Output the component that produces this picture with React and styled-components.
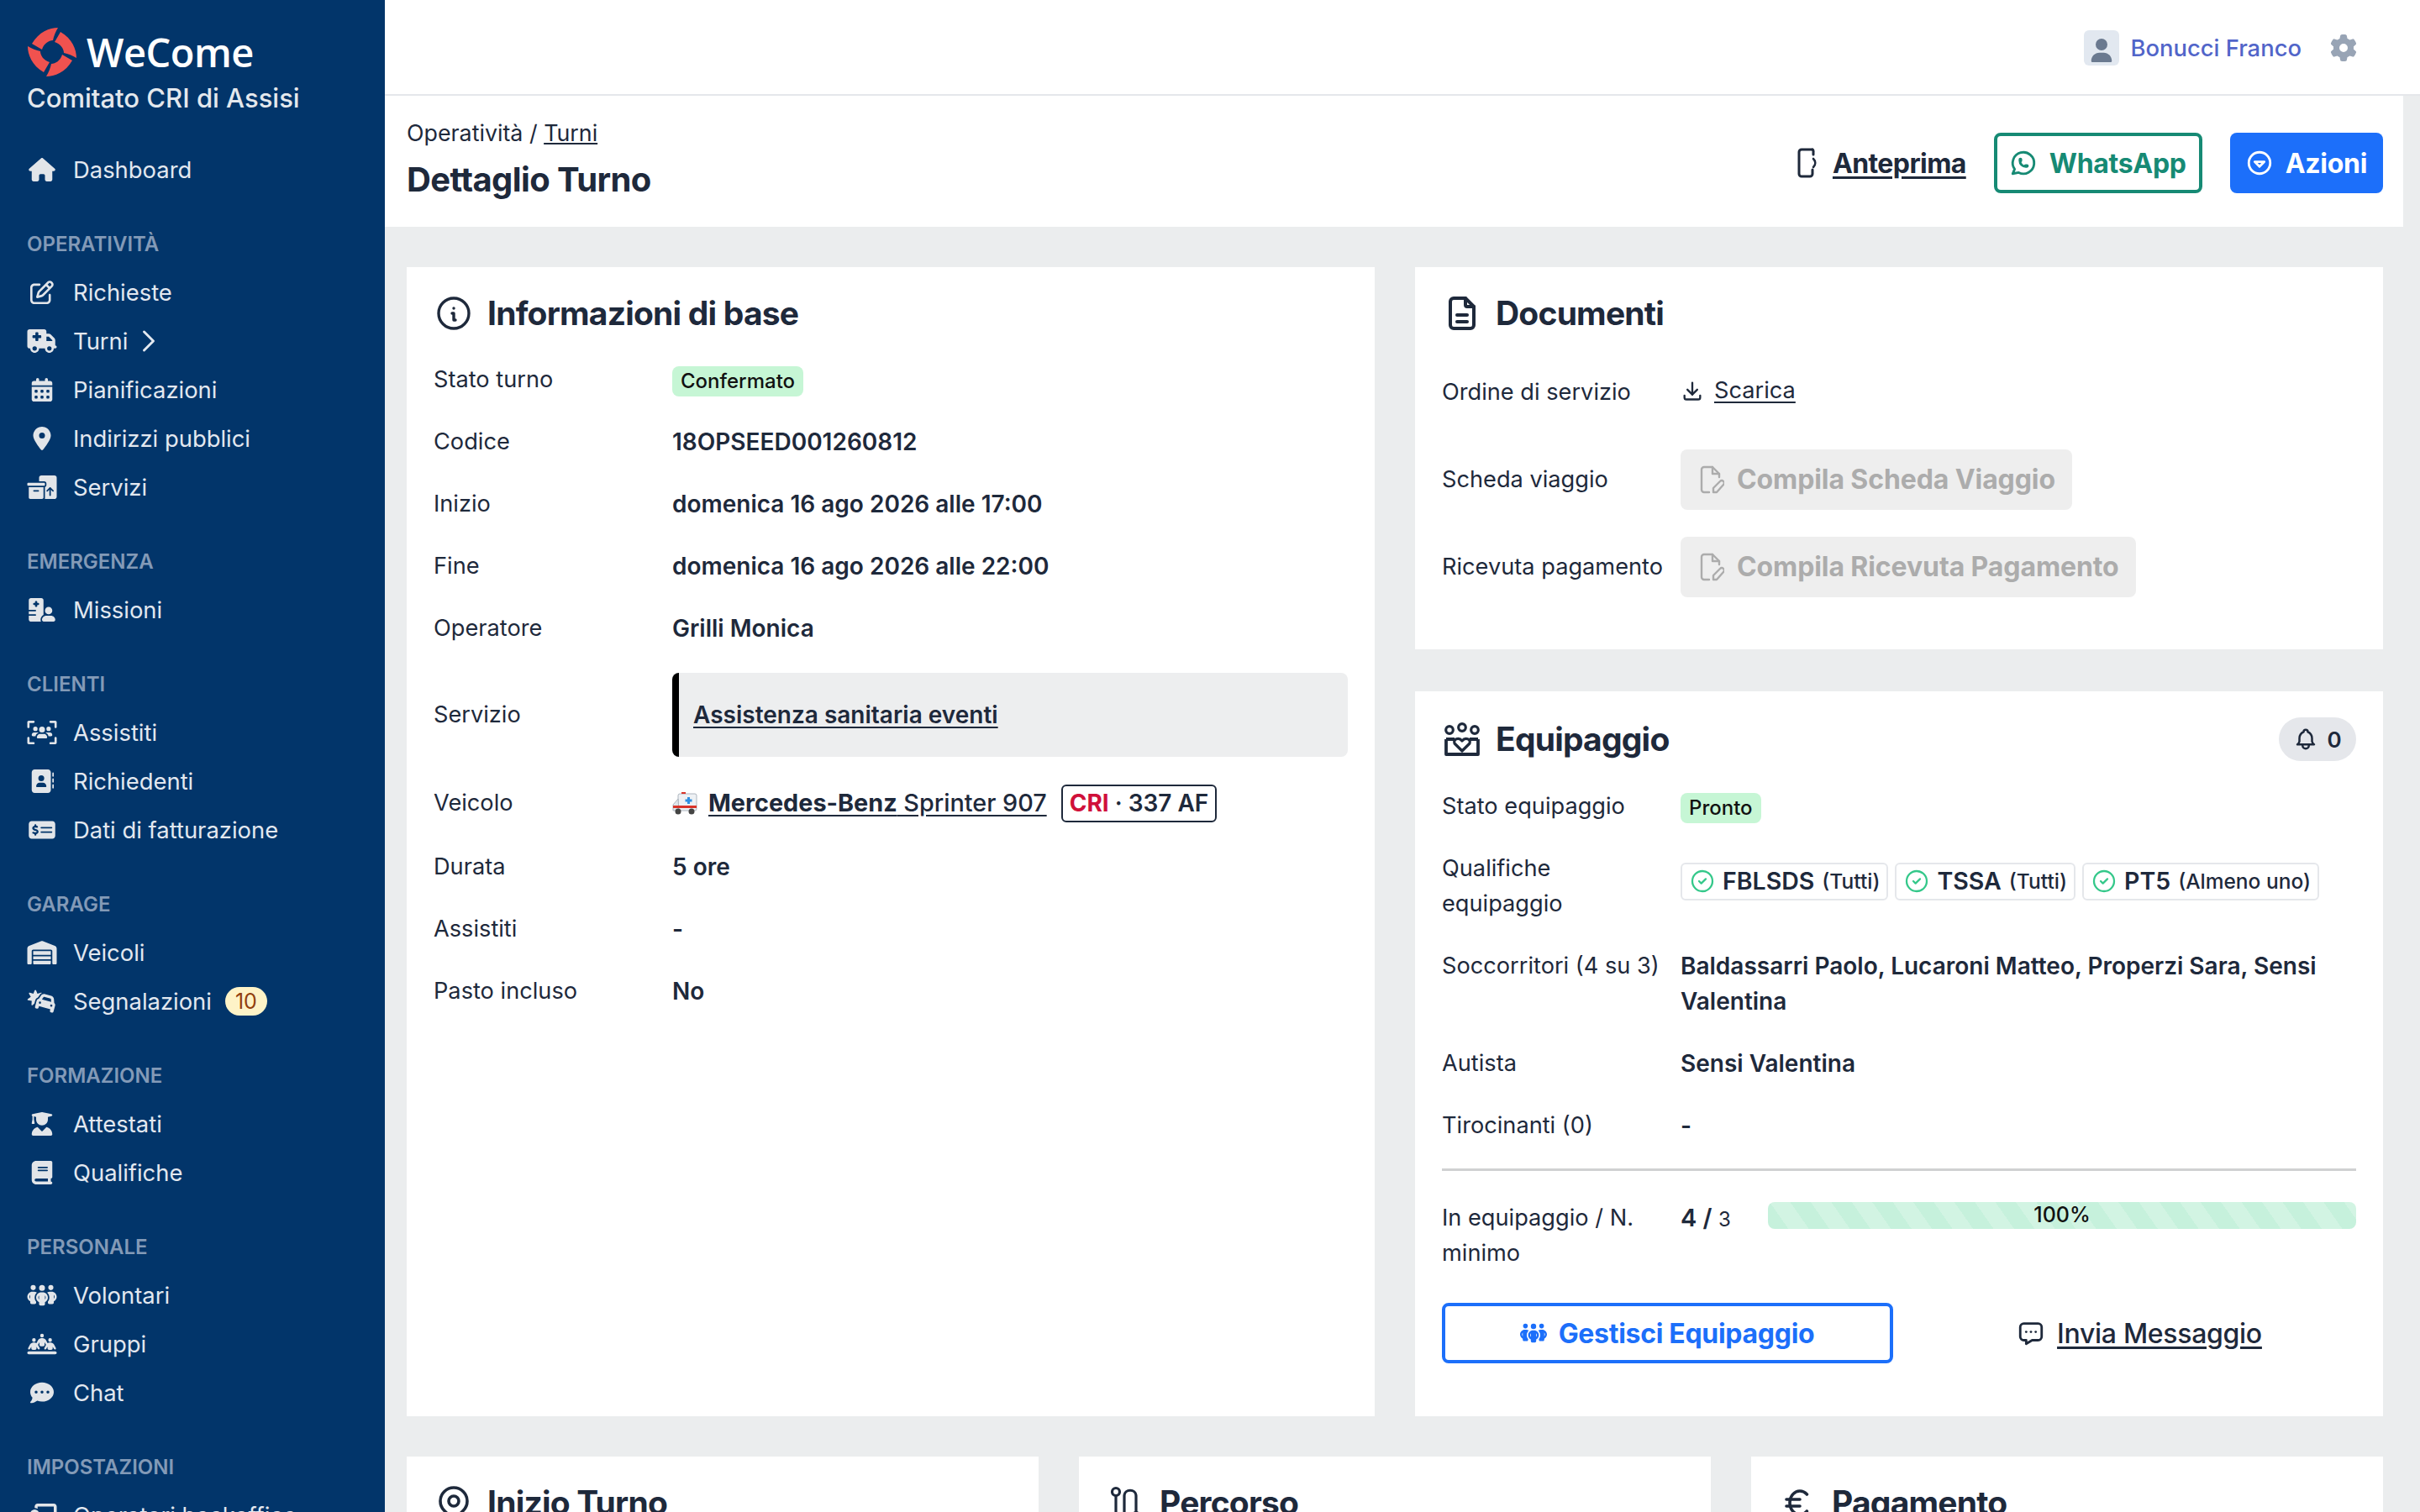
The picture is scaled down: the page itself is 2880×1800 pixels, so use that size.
import React from "react";
import styled, { createGlobalStyle } from "styled-components";
import {
  FaHouse, FaRegPenToSquare, FaTruckMedical, FaCalendarDays, FaLocationDot, FaBoxesPacking,
  FaHospitalUser, FaUsersViewfinder, FaAddressBook, FaMoneyCheckDollar, FaWarehouse, FaCarBurst,
  FaUserGraduate, FaBook, FaPeopleGroup, FaPeopleLine, FaCommentDots, FaChalkboardUser,
  FaGear, FaUser,
} from "react-icons/fa6";
import {
  TbInfoCircle, TbFileDescription, TbBrandWhatsapp, TbCircleCaretDown, TbChevronRight,
  TbDownload, TbCircleCheck, TbBell, TbMessageDots, TbMapPin, TbCurrencyEuro,
} from "react-icons/tb";

const colors = {
  navy: "#02356a",
  ink: "#1e293b",
  page: "#ebedee",
  blue: "#1c6ffa",
  teal: "#168a74",
  green: "#c6f6d5",
};

const Global = createGlobalStyle`
  html, body { margin: 0; padding: 0; background: #fff; }
  * { box-sizing: border-box; }
  body { font-family: Inter, "Liberation Sans", sans-serif; color: ${colors.ink}; }
`;

const Shell = styled.div`
  display: flex;
  width: 2880px;
  height: 1800px;
  overflow: hidden;
`;

const Sidebar = styled.aside`
  width: 458px;
  flex: none;
  height: 1800px;
  overflow: hidden;
  background: ${colors.navy};
  padding: 32px 0 0 32px;
`;

const Brand = styled.div`
  display: flex;
  align-items: center;
  gap: 11px;
  height: 60px;
`;

const BrandName = styled.span`
  font-family: "Open Sans", Inter, sans-serif;
  font-size: 47px;
  font-weight: 600;
  color: #fff;
  letter-spacing: -0.5px;
`;

const Org = styled.div`
  font-size: 31px;
  font-weight: 500;
  line-height: 44px;
  margin-top: 3px;
  color: #e4e8ed;
  white-space: nowrap;
`;

const NavItem = styled.div`
  display: flex;
  align-items: center;
  height: 58px;
  font-size: 27.4px;
  color: #e2e8f0;
  white-space: nowrap;
`;

const NavIcon = styled.span`
  width: 36px;
  flex: none;
  margin-right: 19px;
  display: flex;
  align-items: center;
  justify-content: center;
  color: #e2e5e9;
  svg { width: 36px; height: 28px; }
`;

const Section = styled.section`
  padding-top: 40px;
`;

const SectionTitle = styled.h3`
  margin: 0 0 12px;
  height: 36px;
  line-height: 39px;
  font-size: 24px;
  font-weight: 600;
  color: #839ab7;
`;

const TopNavWrap = styled.div`
  margin-top: 34px;
`;

const Counter = styled.span`
  margin-left: 16px;
  width: 50px;
  height: 34px;
  border-radius: 17px;
  background: #fef3c7;
  color: #92400e;
  font-size: 25px;
  display: flex;
  align-items: center;
  justify-content: center;
`;

const Main = styled.div`
  flex: 1;
  display: flex;
  flex-direction: column;
  min-width: 0;
`;

const TopBar = styled.header`
  height: 114px;
  flex: none;
  background: #fff;
  border-bottom: 2px solid #e5e7eb;
  display: flex;
  align-items: center;
  justify-content: flex-end;
  padding: 2px 75px 0 0;
`;

const Avatar = styled.span`
  width: 42px;
  height: 42px;
  border-radius: 6px;
  background: #e2e8f0;
  color: #6b7a90;
  display: flex;
  align-items: flex-end;
  justify-content: center;
  overflow: hidden;
  padding-bottom: 4px;
  font-size: 28px;
`;

const UserName = styled.span`
  font-size: 27.4px;
  font-weight: 500;
  color: #5165c9;
  margin: 0 34px 0 13px;
`;

const Scroll = styled.div`
  flex: 1;
  background: ${colors.page};
  padding-right: 20px;
  min-height: 0;
  overflow: hidden;
`;

const PageHead = styled.div`
  height: 156px;
  background: #fff;
  display: flex;
  align-items: flex-start;
  justify-content: space-between;
  padding: 22px 24px 0 26px;
`;

const Crumbs = styled.div`
  font-size: 26.8px;
  line-height: 44px;
  a { color: inherit; text-decoration: underline; }
`;

const PageTitle = styled.h1`
  margin: 10px 0 0;
  font-size: 40px;
  line-height: 48px;
  font-weight: 700;
  letter-spacing: -0.6px;
`;

const Actions = styled.div`
  display: flex;
  align-items: center;
  gap: 33px;
  height: 72px;
  margin-top: 22px;
`;

const Button = styled.span`
  height: 72px;
  display: inline-flex;
  align-items: center;
  justify-content: center;
  gap: ${(p) => (p.$flat ? 18 : 14)}px;
  padding: ${(p) => (p.$flat ? "0" : "0 15px 0 14px")};
  border-radius: 8px;
  font-size: 32px;
  font-weight: 700;
  letter-spacing: -0.3px;
  white-space: nowrap;
  border: ${(p) => (p.$flat ? "none" : `4px solid ${p.$line || "transparent"}`)};
  background: ${(p) => p.$fill || "transparent"};
  color: ${(p) => p.$text || colors.ink};
  svg { flex: none; }
`;

const TextLink = styled.span`
  text-decoration: underline;
  text-underline-offset: 4px;
  font-weight: ${(p) => (p.$medium ? 500 : "inherit")};
`;

const Content = styled.div`
  padding: 48px 24px 0 26px;
`;

const TopGrid = styled.div`
  display: grid;
  grid-template-columns: 1152px 1152px;
  gap: 48px;
`;

const Column = styled.div`
  display: flex;
  flex-direction: column;
  gap: 50px;
`;

const BottomGrid = styled.div`
  display: grid;
  grid-template-columns: repeat(3, 752px);
  gap: 48px;
  margin-top: 48px;
`;

const Card = styled.div`
  background: #fff;
  padding: 32px 32px ${(p) => p.$bottom || 32}px;
`;

const CardHead = styled.div`
  display: flex;
  align-items: center;
  min-height: 46px;
  margin-top: ${(p) => (p.$lift ? -p.$lift : 0)}px;
  margin-bottom: ${(p) => p.$gap || 19}px;
`;

const CardTitle = styled.h2`
  margin: 0;
  font-size: 39px;
  line-height: 46px;
  font-weight: 700;
  letter-spacing: -0.8px;
  flex: 1;
`;

const CardIcon = styled.span`
  width: 48px;
  height: 46px;
  margin-right: 16px;
  flex: none;
  display: flex;
  align-items: center;
  justify-content: center;
`;

const BellPill = styled.span`
  width: 92px;
  height: 52px;
  border-radius: 26px;
  background: #e5e7eb;
  display: flex;
  align-items: center;
  justify-content: center;
  gap: 10px;
  font-size: 26px;
  font-weight: 600;
`;

const Row = styled.div`
  display: flex;
  align-items: ${(p) => (p.$top ? "flex-start" : "center")};
  padding: 16px 0;
  min-height: ${(p) => (p.$tall ? "104px" : "74px")};
`;

const Label = styled.div`
  width: 284px;
  flex: none;
  padding-right: 15px;
  font-size: 27.2px;
  line-height: 42px;
`;

const Value = styled.div`
  flex: 1;
  min-width: 0;
  font-size: 28px;
  line-height: 42px;
  font-weight: 600;
`;

const Badge = styled.span`
  display: inline-flex;
  align-items: center;
  height: 36px;
  padding: 0 10px;
  border-radius: 8px;
  background: ${colors.green};
  color: #111;
  font-size: 24px;
  font-weight: 500;
  vertical-align: middle;
`;

const ServiceBox = styled.div`
  height: 100px;
  display: flex;
  align-items: center;
  padding-left: 17px;
  background: #edeeef;
  border-left: 8px solid #000;
  border-radius: 8px;
  a { color: inherit; text-decoration: underline; text-underline-offset: 4px; }
`;

const VehicleLine = styled.div`
  display: flex;
  align-items: center;
  gap: 17px;
  min-height: 46px;
  font-size: 28.8px;
`;

const VehicleLink = styled.span`
  text-decoration: underline;
  text-underline-offset: 4px;
  white-space: nowrap;
  font-weight: 500;
  svg { vertical-align: -5px; margin-right: 13px; }
  b { font-weight: 700; }
`;

const Plate = styled.span`
  height: 45px;
  padding: 0 8px;
  border: 2px solid ${colors.ink};
  border-radius: 6px;
  display: inline-flex;
  align-items: center;
  font-size: 28px;
  white-space: nowrap;
  b { color: #d0103a; font-weight: 700; }
`;

const DownloadLink = styled.span`
  display: inline-flex;
  align-items: center;
  gap: 12px;
  font-size: 27.2px;
  font-weight: 400;
`;

const DisabledButton = styled.span`
  height: 72px;
  display: inline-flex;
  align-items: center;
  gap: 15px;
  padding: 0 20px 0 22px;
  border-radius: 8px;
  background: #eeeeee;
  color: #acacac;
  font-size: 32px;
  font-weight: 700;
  letter-spacing: -0.1px;
  white-space: nowrap;
`;

const Chips = styled.div`
  display: flex;
  gap: 8px;
  margin-top: -12px;
`;

const Chip = styled.span`
  height: 45px;
  display: inline-flex;
  align-items: center;
  gap: 8px;
  padding: 0 8px 0 8px;
  border: 2px solid #e5e7eb;
  border-radius: 6px;
  font-size: 28.5px;
  font-weight: 600;
  white-space: nowrap;
  svg { color: #34c88a; }
  small { font-size: 24.5px; font-weight: 500; margin-left: 1px; }
`;

const Divider = styled.hr`
  border: none;
  height: 3px;
  background: #d0d1d2;
  margin: 14px 0 0;
`;

const CrewRow = styled.div`
  display: flex;
  align-items: flex-start;
  padding: 35px 0 0;
`;

const CrewCount = styled.div`
  width: 104px;
  flex: none;
  font-size: 29px;
  line-height: 42px;
  font-weight: 600;
  small { font-size: 24px; font-weight: 400; }
`;

const Progress = styled.div`
  flex: 1;
  height: 32px;
  margin-top: 2px;
  border-radius: 8px;
  background: repeating-linear-gradient(55deg, #c6f1dc 0 20px, #d2f4e3 20px 40px);
  color: #111;
  font-size: 25px;
  font-weight: 500;
  line-height: 30px;
  text-align: center;
`;

const CrewActions = styled.div`
  display: grid;
  grid-template-columns: 537px 1fr;
  margin-top: 38px;
`;

const CenterCell = styled.div`
  display: flex;
  justify-content: center;
  padding-left: 36px;
`;

const Logo = () => (
  <svg width="60" height="60" viewBox="0 0 60 60" fill="#f0524f">
    {[0, 90, 180, 270].map((r) => (
      <path
        key={r}
        transform={`rotate(${r} 30 30)`}
        d="M37 1 C 27 1, 14 6, 6 20 L 18 27 C 20 20, 26 16, 31 16 C 32 11, 34 6, 37 1 Z"
      />
    ))}
  </svg>
);

const CrewIcon = () => (
  <svg width="42" height="40" viewBox="0 0 42 40" fill="none" stroke={colors.ink} strokeWidth="3.200" strokeLinejoin="round">
    <circle cx="6" cy="9" r="4.300" />
    <circle cx="21" cy="6" r="4.300" />
    <circle cx="36" cy="9" r="4.300" />
    <path d="M2 20 H12 M30 20 H40 M2 20 V38 H40 V20" strokeWidth="3.800" />
    <path d="M21 34 L12 25 C10 20, 17 17, 21 22 C25 17, 32 20, 30 25 Z" />
  </svg>
);

const RouteIcon = () => (
  <svg width="40" height="40" viewBox="0 0 40 40" fill="none" stroke={colors.ink} strokeWidth="3.200" strokeLinecap="round" strokeLinejoin="round">
    <circle cx="8" cy="7" r="4.500" />
    <path d="M8 12 V36" />
    <path d="M18 36 V12 C18 3, 32 3, 32 12 V30" />
    <circle cx="32" cy="34" r="2.500" />
  </svg>
);

const PhoneSignalIcon = () => (
  <svg width="24" height="36" viewBox="0 0 24 36" fill="none" stroke="currentColor" strokeWidth="3" strokeLinecap="round">
    <path d="M18 2 H5 a3 3 0 0 0 -3 3 V31 a3 3 0 0 0 3 3 H15 a3 3 0 0 0 3 -3 V26" />
    <path d="M18 2 a3 3 0 0 1 1 3 V8" />
    <path d="M19 13 C22 16, 22 20, 19 23" strokeWidth="2.600" />
  </svg>
);

const FilePenIcon = () => (
  <svg width="30" height="36" viewBox="0 0 30 36" fill="none" stroke="currentColor" strokeWidth="2.400" strokeLinecap="round" strokeLinejoin="round">
    <path d="M12 33 H6 a3 3 0 0 1 -3 -3 V6 a3 3 0 0 1 3 -3 H16 L24 11 V15" />
    <path d="M16 3 V11 H24" />
    <path d="M17 33 V28 L25 20 a2.800 2.800 0 0 1 4 4 L21 33 Z" />
  </svg>
);

const Ambulance = () => (
  <svg width="30" height="28" viewBox="0 0 30 28">
    <rect x="7" y="2" width="22" height="20" rx="2" fill="#eef1f4" stroke="#aeb6bf" strokeWidth="1" />
    <path d="M7 8 L1 15 V22 H8 Z" fill="#dfe5ea" stroke="#aeb6bf" strokeWidth="1" />
    <rect x="1" y="16" width="28" height="3" fill="#d8352a" />
    <rect x="18" y="6" width="3" height="8" fill="#2f8fe0" />
    <rect x="15.500" y="8.500" width="8" height="3" fill="#2f8fe0" />
    <rect x="11" y="0" width="5" height="2" fill="#d8352a" />
    <circle cx="7" cy="23" r="3.500" fill="#444" />
    <circle cx="23" cy="23" r="3.500" fill="#444" />
  </svg>
);

const navSections = [
  {
    title: "OPERATIVITÀ",
    items: [
      { icon: FaRegPenToSquare, label: "Richieste" },
      { icon: FaTruckMedical, label: "Turni", chevron: true },
      { icon: FaCalendarDays, label: "Pianificazioni" },
      { icon: FaLocationDot, label: "Indirizzi pubblici" },
      { icon: FaBoxesPacking, label: "Servizi" },
    ],
  },
  { title: "EMERGENZA", items: [{ icon: FaHospitalUser, label: "Missioni" }] },
  {
    title: "CLIENTI",
    items: [
      { icon: FaUsersViewfinder, label: "Assistiti" },
      { icon: FaAddressBook, label: "Richiedenti" },
      { icon: FaMoneyCheckDollar, label: "Dati di fatturazione" },
    ],
  },
  {
    title: "GARAGE",
    items: [
      { icon: FaWarehouse, label: "Veicoli" },
      { icon: FaCarBurst, label: "Segnalazioni", count: 10 },
    ],
  },
  {
    title: "FORMAZIONE",
    items: [
      { icon: FaUserGraduate, label: "Attestati" },
      { icon: FaBook, label: "Qualifiche" },
    ],
  },
  {
    title: "PERSONALE",
    items: [
      { icon: FaPeopleGroup, label: "Volontari" },
      { icon: FaPeopleLine, label: "Gruppi" },
      { icon: FaCommentDots, label: "Chat" },
    ],
  },
  { title: "IMPOSTAZIONI", items: [{ icon: FaChalkboardUser, label: "Operatori backoffice" }] },
];

const infoRows = [
  ["Codice", "18OPSEED001260812"],
  ["Inizio", "domenica 16 ago 2026 alle 17:00"],
  ["Fine", "domenica 16 ago 2026 alle 22:00"],
  ["Operatore", "Grilli Monica"],
];

const tailRows = [
  ["Durata", "5 ore"],
  ["Assistiti", "-"],
  ["Pasto incluso", "No"],
];

const NavEntry = ({ item }) => {
  const Icon = item.icon;
  return (
    <NavItem>
      <NavIcon><Icon /></NavIcon>
      {item.label}
      {item.chevron && <TbChevronRight size={44} strokeWidth={1.6} style={{ marginLeft: 3 }} />}
      {item.count && <Counter>{item.count}</Counter>}
    </NavItem>
  );
};

export default function App() {
  return (
    <Shell>
      <Global />
      <Sidebar>
        <Brand>
          <Logo />
          <BrandName>WeCome</BrandName>
        </Brand>
        <Org>Comitato CRI di Assisi</Org>
        <TopNavWrap>
          <NavEntry item={{ icon: FaHouse, label: "Dashboard" }} />
        </TopNavWrap>
        {navSections.map((s) => (
          <Section key={s.title}>
            <SectionTitle>{s.title}</SectionTitle>
            {s.items.map((i) => <NavEntry key={i.label} item={i} />)}
          </Section>
        ))}
      </Sidebar>
      <Main>
        <TopBar>
          <Avatar><FaUser /></Avatar>
          <UserName>Bonucci Franco</UserName>
          <FaGear size={32} color="#98a4b5" />
        </TopBar>
        <Scroll>
          <PageHead>
            <div>
              <Crumbs>Operatività / <a href="#turni">Turni</a></Crumbs>
              <PageTitle>Dettaglio Turno</PageTitle>
            </div>
            <Actions>
              <Button $flat>
                <PhoneSignalIcon />
                <TextLink $medium={false} style={{ letterSpacing: "-0.6px" }}>Anteprima</TextLink>
              </Button>
              <Button $line={colors.teal} $text={colors.teal}>
                <TbBrandWhatsapp size={34} />
                WhatsApp
              </Button>
              <Button $fill={colors.blue} $text="#fff">
                <TbCircleCaretDown size={34} />
                Azioni
              </Button>
            </Actions>
          </PageHead>
          <Content>
            <TopGrid>
              <Card>
                <CardHead>
                  <CardIcon><TbInfoCircle size={52} strokeWidth={1.7} /></CardIcon>
                  <CardTitle>Informazioni di base</CardTitle>
                </CardHead>
                <Row>
                  <Label>Stato turno</Label>
                  <Value><Badge>Confermato</Badge></Value>
                </Row>
                {infoRows.map(([k, v]) => (
                  <Row key={k}>
                    <Label>{k}</Label>
                    <Value>{v}</Value>
                  </Row>
                ))}
                <Row>
                  <Label>Servizio</Label>
                  <Value>
                    <ServiceBox><a href="#servizio">Assistenza sanitaria eventi</a></ServiceBox>
                  </Value>
                </Row>
                <Row>
                  <Label>Veicolo</Label>
                  <Value>
                    <VehicleLine>
                      <VehicleLink><Ambulance /><b>Mercedes-Benz</b> Sprinter 907</VehicleLink>
                      <Plate><b>CRI</b>&nbsp;· 337 AF</Plate>
                    </VehicleLine>
                  </Value>
                </Row>
                {tailRows.map(([k, v]) => (
                  <Row key={k}>
                    <Label>{k}</Label>
                    <Value>{v}</Value>
                  </Row>
                ))}
              </Card>
              <Column>
                <Card $bottom={46}>
                  <CardHead>
                    <CardIcon><TbFileDescription size={52} strokeWidth={2} /></CardIcon>
                    <CardTitle>Documenti</CardTitle>
                  </CardHead>
                  <Row $tall>
                    <Label>Ordine di servizio</Label>
                    <Value>
                      <DownloadLink><TbDownload size={28} /><TextLink>Scarica</TextLink></DownloadLink>
                    </Value>
                  </Row>
                  <Row $tall>
                    <Label>Scheda viaggio</Label>
                    <Value><DisabledButton><FilePenIcon />Compila Scheda Viaggio</DisabledButton></Value>
                  </Row>
                  <Row $tall>
                    <Label>Ricevuta pagamento</Label>
                    <Value><DisabledButton><FilePenIcon />Compila Ricevuta Pagamento</DisabledButton></Value>
                  </Row>
                </Card>
                <Card $bottom={63}>
                  <CardHead $lift={1} $gap={17}>
                    <CardIcon><CrewIcon /></CardIcon>
                    <CardTitle>Equipaggio</CardTitle>
                    <BellPill><TbBell size={30} />0</BellPill>
                  </CardHead>
                  <Row>
                    <Label>Stato equipaggio</Label>
                    <Value><Badge>Pronto</Badge></Value>
                  </Row>
                  <Row>
                    <Label>Qualifiche equipaggio</Label>
                    <Value>
                      <Chips>
                        <Chip><TbCircleCheck size={32} strokeWidth={1.7} />FBLSDS<small>(Tutti)</small></Chip>
                        <Chip><TbCircleCheck size={32} strokeWidth={1.7} />TSSA<small>(Tutti)</small></Chip>
                        <Chip><TbCircleCheck size={32} strokeWidth={1.7} />PT5<small>(Almeno uno)</small></Chip>
                      </Chips>
                    </Value>
                  </Row>
                  <Row $top>
                    <Label>Soccorritori (4 su 3)</Label>
                    <Value>Baldassarri Paolo, Lucaroni Matteo, Properzi Sara, Sensi Valentina</Value>
                  </Row>
                  <Row>
                    <Label>Autista</Label>
                    <Value>Sensi Valentina</Value>
                  </Row>
                  <Row>
                    <Label>Tirocinanti (0)</Label>
                    <Value>-</Value>
                  </Row>
                  <Divider />
                  <CrewRow>
                    <Label>In equipaggio / N. minimo</Label>
                    <CrewCount>4 / <small>3</small></CrewCount>
                    <Progress>100%</Progress>
                  </CrewRow>
                  <CrewActions>
                    <Button $line={colors.blue} $text={colors.blue}>
                      <FaPeopleGroup size={32} />
                      Gestisci Equipaggio
                    </Button>
                    <CenterCell>
                      <Button>
                        <TbMessageDots size={34} />
                        <TextLink $medium>Invia Messaggio</TextLink>
                      </Button>
                    </CenterCell>
                  </CrewActions>
                </Card>
              </Column>
            </TopGrid>
            <BottomGrid>
              <Card>
                <CardHead>
                  <CardIcon><TbMapPin size={48} strokeWidth={1.8} /></CardIcon>
                  <CardTitle>Inizio Turno</CardTitle>
                </CardHead>
              </Card>
              <Card>
                <CardHead>
                  <CardIcon><RouteIcon /></CardIcon>
                  <CardTitle>Percorso</CardTitle>
                </CardHead>
              </Card>
              <Card>
                <CardHead>
                  <CardIcon><TbCurrencyEuro size={48} strokeWidth={1.8} /></CardIcon>
                  <CardTitle>Pagamento</CardTitle>
                </CardHead>
              </Card>
            </BottomGrid>
          </Content>
        </Scroll>
      </Main>
    </Shell>
  );
}
